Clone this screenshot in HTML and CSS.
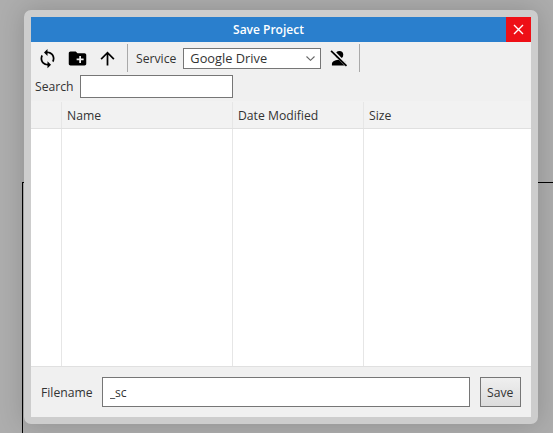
FILE: index.html
```html
<!DOCTYPE html>
<html lang="en">
<head>
    <meta charset="UTF-8">
    <meta name="viewport" content="width=device-width, initial-scale=1.0">
    <title>Save Project</title>
    <link rel="stylesheet" href="styles.css">
</head>
<body>
    <div class="page-edge"></div>
    <div class="dialog">
        <div class="title-bar">
            <span class="title">Save Project</span>
            <button class="close-btn">
                <svg width="11" height="11" viewBox="0 0 11 11"><path d="M1 1l9 9M10 1l-9 9" stroke="#fff" stroke-width="1.4" fill="none"/></svg>
            </button>
        </div>
        <div class="toolbar">
            <div class="tool-row">
                <button class="icon-btn">
                    <svg width="21" height="21" viewBox="0 0 24 24"><path d="M12 4V1L8 5l4 4V6c3.31 0 6 2.69 6 6 0 1.01-.25 1.97-.7 2.8l1.46 1.46C19.54 15.03 20 13.57 20 12c0-4.42-3.58-8-8-8zm0 14c-3.31 0-6-2.69-6-6 0-1.01.25-1.97.7-2.8L5.24 7.74C4.46 8.97 4 10.43 4 12c0 4.42 3.58 8 8 8v3l4-4-4-4v3z"/></svg>
                </button>
                <button class="icon-btn">
                    <svg width="21" height="21" viewBox="0 0 24 24"><path d="M20 6h-8l-2-2H4c-1.11 0-1.99.89-1.99 2L2 18c0 1.11.89 2 2 2h16c1.11 0 2-.89 2-2V8c0-1.11-.89-2-2-2zm-1 8h-3v3h-2v-3h-3v-2h3V9h2v3h3v2z"/></svg>
                </button>
                <button class="icon-btn">
                    <svg width="21" height="21" viewBox="0 0 24 24"><path d="M4 12l1.41 1.41L11 7.83V20h2V7.83l5.58 5.59L20 12l-8-8-8 8z"/></svg>
                </button>
                <div class="divider"></div>
                <label class="field-label service-label">Service</label>
                <div class="select-box">
                    <span>Google Drive</span>
                    <svg width="9" height="5" viewBox="0 0 9 5"><path d="M.5.5l4 3.8 4-3.8" stroke="#666" stroke-width="1.1" fill="none"/></svg>
                </div>
                <button class="icon-btn user-btn">
                    <svg width="20" height="20" viewBox="0 0 24 24"><circle cx="12.5" cy="8.2" r="4.6"/><path d="M3.5 21v-2.2c0-3 5.5-4.6 9-4.6s8 1.6 8 4.6V21z"/><path d="M4 3.5l17 17" stroke="#f0f0f0" stroke-width="4"/><path d="M2.5 3.5l18.5 18" stroke="#000" stroke-width="2"/></svg>
                </button>
                <div class="divider"></div>
            </div>
            <div class="search-row">
                <label class="field-label">Search</label>
                <input class="search-input" type="text">
            </div>
        </div>
        <div class="file-table">
            <div class="table-head">
                <div class="col col-check"></div>
                <div class="col col-name">Name</div>
                <div class="col col-date">Date Modified</div>
                <div class="col col-size">Size</div>
            </div>
            <div class="table-body">
                <div class="col col-check"></div>
                <div class="col col-name"></div>
                <div class="col col-date"></div>
                <div class="col col-size"></div>
            </div>
        </div>
        <div class="footer">
            <label class="field-label">Filename</label>
            <input class="filename-input" type="text" value="_sc">
            <button class="save-btn">Save</button>
        </div>
    </div>
</body>
</html>
```

FILE: styles.css
```css
* {
    box-sizing: border-box;
}
html, body {
    height: 100%;
}
body {
    margin: 0;
    padding: 10px 0 0 24px;
    background-color: #adadad;
    font-family: "Open Sans", "Noto Sans", sans-serif;
    font-size: 12.2px;
    color: #333;
    overflow: hidden;
    position: relative;
}
.page-edge {
    position: absolute;
    left: 22px;
    top: 182px;
    right: 0;
    bottom: 0;
    border-top: 1px solid #000;
    border-left: 1px solid #000;
}
.dialog {
    position: relative;
    width: 514px;
    height: 414px;
    border: 7px solid #cdcdcd;
    border-radius: 7px;
    background-color: #f0f0f0;
    box-shadow: 0 0 26px rgba(0, 0, 0, 0.18);
    display: flex;
    flex-direction: column;
}
.title-bar {
    height: 25px;
    background-color: #2a7fcd;
    display: flex;
    align-items: center;
    flex: none;
}
.title {
    flex: 1;
    text-align: center;
    color: white;
    font-size: 12px;
    font-weight: 600;
}
.close-btn {
    width: 25px;
    height: 25px;
    border: none;
    padding: 0;
    background-color: #ee0f16;
    display: flex;
    align-items: center;
    justify-content: center;
}
.toolbar {
    height: 59px;
    flex: none;
}
.tool-row {
    height: 32px;
    padding-left: 1px;
    display: flex;
    align-items: center;
}
.icon-btn {
    width: 30px;
    height: 28px;
    padding: 0;
    border: none;
    background: none;
    display: flex;
    align-items: center;
    justify-content: center;
}
.divider {
    width: 1px;
    height: 28px;
    margin-left: 5px;
    background-color: #a9a9a9;
}
.field-label {
    color: #333;
}
.service-label {
    margin-left: 8px;
}
.select-box {
    width: 138px;
    height: 21px;
    margin-left: 7px;
    padding: 0 5px 0 6px;
    border: 1px solid #767676;
    background-color: white;
    font-size: 12.8px;
    display: flex;
    align-items: center;
    justify-content: space-between;
}
.user-btn {
    margin-left: 3px;
}
.search-row {
    height: 25px;
    padding-left: 4px;
    display: flex;
    align-items: center;
}
.search-input {
    width: 153px;
    height: 23px;
    margin-left: 6px;
    border: 1px solid #767676;
    background-color: white;
}
.file-table {
    flex: 1;
    display: flex;
    flex-direction: column;
    border-bottom: 1px solid #e0e0e0;
}
.table-head {
    height: 28px;
    display: flex;
    flex: none;
    background-color: #f2f2f2;
    border-bottom: 1px solid #e0e0e0;
    padding-top: 1px;
}
.table-body {
    flex: 1;
    display: flex;
    background-color: white;
}
.col {
    border-right: 1px solid #e6e6e6;
    padding-left: 5px;
    line-height: 27px;
}
.col-check {
    width: 31px;
}
.col-name {
    width: 171px;
}
.col-date {
    width: 131px;
}
.col-size {
    flex: 1;
    border-right: none;
}
.footer {
    height: 50px;
    flex: none;
    padding: 0 10px;
    display: flex;
    align-items: center;
}
.filename-input {
    flex: none;
    width: 368px;
    height: 30px;
    margin-left: 9px;
    padding: 0 7px;
    border: 1px solid #767676;
    background-color: white;
    font-family: inherit;
    font-size: 12.2px;
    color: #333;
}
.save-btn {
    flex: none;
    width: 41px;
    height: 30px;
    margin-left: 10px;
    padding: 0;
    border: 1px solid #767676;
    background: linear-gradient(#efefef, #dcdcdc);
    font-family: inherit;
    font-size: 12.2px;
    color: #333;
}
```
